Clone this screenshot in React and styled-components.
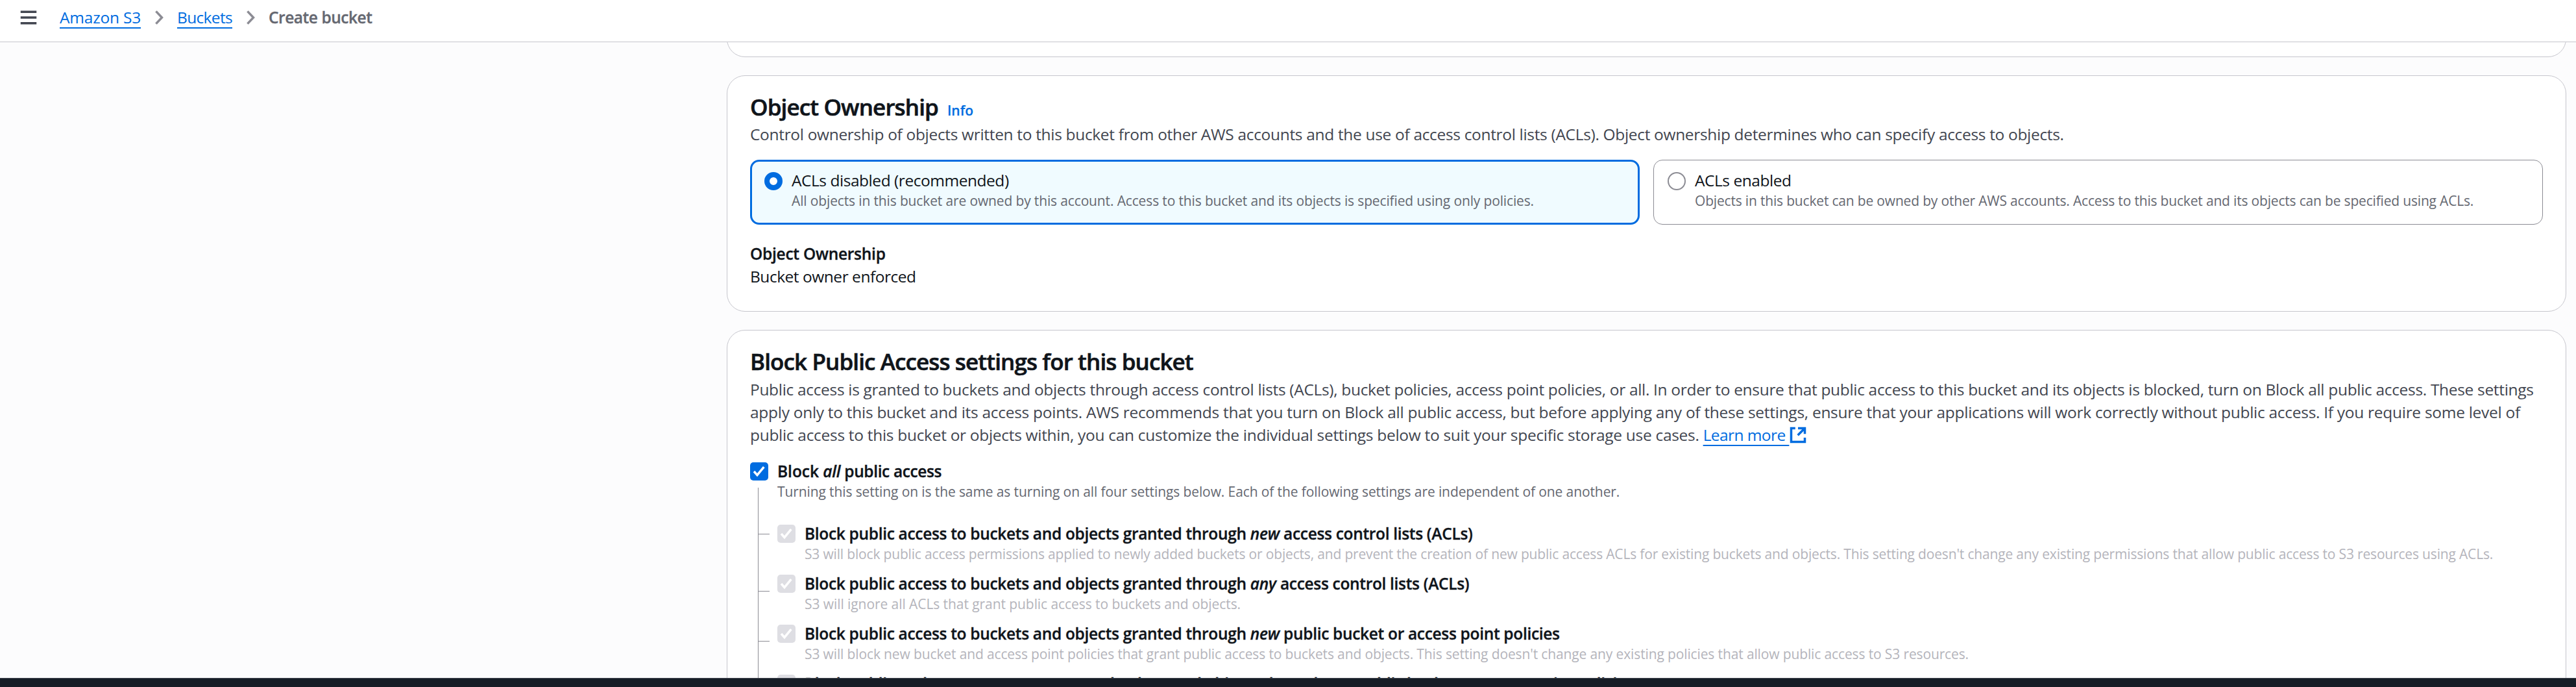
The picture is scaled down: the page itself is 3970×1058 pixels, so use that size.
import React from "react";
import styled, { createGlobalStyle, css } from "styled-components";

const color = {
  text: "#0f141a",
  body: "#424650",
  muted: "#656871",
  disabled: "#b4b4bb",
  link: "#006ce0",
  line: "#c6c6cd",
  control: "#8c8c94",
};

const GlobalStyle = createGlobalStyle`
  *, *::before, *::after { box-sizing: border-box; }
  body {
    margin: 0;
    background: #fcfcfd;
    color: ${color.text};
    font-family: "Open Sans", "Noto Sans", sans-serif;
    font-size: 24.5px;
    line-height: 35px;
    white-space: nowrap;
  }
`;

const strong = css`
  font-weight: 600;
  -webkit-text-stroke: 0.35px currentColor;
`;

const Page = styled.div`
  display: flex;
  flex-direction: column;
  height: 1058px;
  overflow: hidden;
`;

const TopBar = styled.header`
  display: flex;
  flex: none;
  align-items: flex-start;
  height: 65px;
  padding: 9px 0 0 30px;
  background: #fff;
  border-bottom: 1px solid ${color.line};
`;

const MenuButton = styled.button`
  display: flex;
  margin: 3.75px 34px 0 0;
  padding: 0;
  border: 0;
  background: none;
  color: ${color.body};
`;

const Breadcrumbs = styled.nav`
  display: flex;
  align-items: flex-start;
`;

const Separator = styled.svg`
  width: 14px;
  height: 24px;
  margin: 6px 20px 0 22px;
  fill: none;
  stroke: ${color.control};
  stroke-width: 3.5;
`;

const Link = styled.a`
  color: ${color.link};
  letter-spacing: ${(p) => p.$track || 0}px;
  text-decoration: underline;
  text-decoration-thickness: 2px;
  text-underline-offset: 6px;
  text-decoration-skip-ink: none;
`;

const CurrentCrumb = styled.span`
  ${strong}
  color: ${color.muted};
  letter-spacing: -0.457px;
`;

const Main = styled.main`
  display: flex;
  flex: 1;
  flex-direction: column;
  gap: 28px;
  min-height: 0;
  overflow: hidden;
  padding: 0 15px 0 1120px;
`;

const Card = styled.section`
  flex: none;
  height: ${(p) => p.$height}px;
  margin-top: ${(p) => p.$offset || 0}px;
  padding: 27px 35px 0;
  background: #fff;
  border: 1px solid ${color.line};
  border-radius: 28px;
`;

const Heading = styled.h2`
  display: flex;
  align-items: baseline;
  gap: 14px;
  margin: 0;
  font-size: 35px;
  line-height: 42px;
  font-weight: 600;
  -webkit-text-stroke: 0.6px currentColor;
  letter-spacing: -0.88px;
`;

const InfoLink = styled.a`
  color: ${color.link};
  font-size: 21px;
  line-height: 28px;
  letter-spacing: 0;
  -webkit-text-stroke: 0.2px currentColor;
`;

const Description = styled.p`
  display: flex;
  flex-direction: column;
  margin: ${(p) => p.$top}px 0 0;
  color: ${color.body};
`;

const Line = styled.span`
  letter-spacing: ${(p) => p.$track || 0}px;
`;

const ExternalIcon = styled.svg`
  width: 28px;
  height: 28px;
  margin-left: 0;
  vertical-align: -5px;
  fill: none;
  stroke: ${color.link};
  stroke-width: 2;
`;

const Options = styled.div`
  display: grid;
  grid-template-columns: 1fr 1fr;
  gap: 21px;
  margin-top: 22px;
`;

const Option = styled.label`
  display: flex;
  align-items: flex-start;
  gap: 14px;
  height: 100px;
  padding: ${(p) => (p.$selected ? "11px 19px" : "13px 21px")};
  border: ${(p) => (p.$selected ? `3px solid ${color.link}` : `1px solid ${color.control}`)};
  border-radius: 14px;
  background: ${(p) => (p.$selected ? "#f0fbff" : "#fff")};
`;

const Radio = styled.span`
  flex: none;
  width: 28px;
  height: 28px;
  margin-top: 5px;
  border-radius: 50%;
  border: ${(p) => (p.$selected ? `8px solid ${color.link}` : `2px solid ${color.control}`)};
  background: #fff;
`;

const Stack = styled.div`
  display: flex;
  flex-direction: column;
`;

const Label = styled.span`
  letter-spacing: -0.46px;
`;

const Hint = styled.span`
  color: ${(p) => (p.$disabled ? color.disabled : color.muted)};
  font-size: 21px;
  line-height: 28px;
  letter-spacing: ${(p) => p.$track}px;
`;

const Field = styled.dl`
  margin: 27px 0 0;
`;

const Term = styled.dt`
  ${strong}
  letter-spacing: -0.26px;
`;

const Value = styled.dd`
  margin: 0;
  letter-spacing: -0.47px;
`;

const Tree = styled.div`
  display: grid;
  grid-template-columns: 28px 1fr;
  column-gap: 14px;
  margin-top: 21px;
`;

const Trunk = styled.div`
  display: flex;
  flex-direction: column;
  padding-top: 4px;
  gap: 11px;
  &::after {
    content: "";
    flex: 1;
    width: 1px;
    margin-left: 12px;
    background: ${color.control};
  }
`;

const Branches = styled.div`
  display: flex;
  flex-direction: column;
  gap: 14px;
  margin-top: 33px;
`;

const Branch = styled.div`
  position: relative;
  display: flex;
  align-items: flex-start;
  gap: 14px;
  &::before {
    content: "";
    position: absolute;
    left: -29px;
    top: ${(p) => p.$tick}px;
    width: 17px;
    height: 1px;
    background: ${color.control};
  }
`;

const BoxIcon = styled.svg`
  flex: none;
  width: 28px;
  height: 28px;
  margin-top: ${(p) => p.$top || 0}px;
  border-radius: 5px;
  background: ${(p) => (p.$disabled ? "#dedee3" : color.link)};
  fill: none;
  stroke: #fff;
  stroke-width: 3.5;
`;

const CheckLabel = styled.span`
  ${strong}
  letter-spacing: ${(p) => p.$track}px;
  em { letter-spacing: -0.2px; }
`;

const Footer = styled.footer`
  flex: none;
  height: 14px;
  background: #161d26;
  border-top: 1px solid #424650;
`;

const Checkbox = (props) => (
  <BoxIcon viewBox="0 0 28 28" {...props}>
    <path d="M6 14l5 5.6L21.3 7.2" />
  </BoxIcon>
);

const Chevron = () => (
  <Separator viewBox="0 0 14 24">
    <path d="M1.4 2.4L10.5 12L1.4 21.6" />
  </Separator>
);

const rules = [
  {
    tick: 18, em: "new", rest: "access control lists (ACLs)", track: -0.172,
    hint: "S3 will block public access permissions applied to newly added buckets or objects, and prevent the creation of new public access ACLs for existing buckets and objects. This setting doesn't change any existing permissions that allow public access to S3 resources using ACLs.",
  },
  {
    tick: 29, em: "any", rest: "access control lists (ACLs)", track: -0.071,
    hint: "S3 will ignore all ACLs that grant public access to buckets and objects.",
  },
  {
    tick: 29, em: "new", rest: "public bucket or access point policies", track: -0.13,
    hint: "S3 will block new bucket and access point policies that grant public access to buckets and objects. This setting doesn't change any existing policies that allow public access to S3 resources.",
  },
];

export default function App() {
  return (
    <Page>
      <GlobalStyle />
      <TopBar>
        <MenuButton aria-label="Open menu">
          <svg width="28" height="28" viewBox="0 0 16 16" stroke="currentColor" strokeWidth="2">
            <path d="M1 3h14M1 8h14M1 13h14" />
          </svg>
        </MenuButton>
        <Breadcrumbs>
          <Link $track={-0.205}>Amazon S3</Link>
          <Chevron />
          <Link $track={-0.66}>Buckets</Link>
          <Chevron />
          <CurrentCrumb>Create bucket</CurrentCrumb>
        </Breadcrumbs>
      </TopBar>
      <Main>
        <Card $height={63} $offset={-40} />
        <Card $height={364}>
          <Heading>
            Object Ownership <InfoLink>Info</InfoLink>
          </Heading>
          <Description $top={3}>
            <Line $track={-0.324}>
              Control ownership of objects written to this bucket from other AWS accounts and the use of access control lists (ACLs). Object ownership determines who can specify access to objects.
            </Line>
          </Description>
          <Options>
            <Option $selected>
              <Radio $selected />
              <Stack>
                <Label>ACLs disabled (recommended)</Label>
                <Hint $track={-0.14}>
                  All objects in this bucket are owned by this account. Access to this bucket and its objects is specified using only policies.
                </Hint>
              </Stack>
            </Option>
            <Option>
              <Radio />
              <Stack>
                <Label>ACLs enabled</Label>
                <Hint $track={-0.18}>
                  Objects in this bucket can be owned by other AWS accounts. Access to this bucket and its objects can be specified using ACLs.
                </Hint>
              </Stack>
            </Option>
          </Options>
          <Field>
            <Term>Object Ownership</Term>
            <Value>Bucket owner enforced</Value>
          </Field>
        </Card>
        <Card $height={640}>
          <Heading>Block Public Access settings for this bucket</Heading>
          <Description $top={4}>
            <Line $track={-0.322}>
              Public access is granted to buckets and objects through access control lists (ACLs), bucket policies, access point policies, or all. In order to ensure that public access to this bucket and its objects is blocked, turn on Block all public access. These settings
            </Line>
            <Line $track={-0.286}>
              apply only to this bucket and its access points. AWS recommends that you turn on Block all public access, but before applying any of these settings, ensure that your applications will work correctly without public access. If you require some level of
            </Line>
            <Line $track={-0.3}>
              public access to this bucket or objects within, you can customize the individual settings below to suit your specific storage use cases.{" "}
              <Link $track={-0.577}>Learn more&nbsp;</Link>
              <ExternalIcon viewBox="0 0 16 16">
                <path d="M14 10.3V14H2V2h3.6M8 2h6v5M14 2L7.8 8.2" />
              </ExternalIcon>
            </Line>
          </Description>
          <Tree>
            <Trunk>
              <Checkbox />
            </Trunk>
            <Stack>
              <CheckLabel $track={-0.38}>
                <Line $track={-0.05}>Block </Line>
                <em>all</em> public access
              </CheckLabel>
              <Hint $track={-0.106}>
                Turning this setting on is the same as turning on all four settings below. Each of the following settings are independent of one another.
              </Hint>
              <Branches>
                {rules.map((rule) => (
                  <Branch key={rule.hint} $tick={rule.tick}>
                    <Checkbox $disabled $top={4} />
                    <Stack>
                      <CheckLabel $track={-0.32}>
                        Block public access to buckets and objects granted through <em>{rule.em}</em> {rule.rest}
                      </CheckLabel>
                      <Hint $disabled $track={rule.track}>{rule.hint}</Hint>
                    </Stack>
                  </Branch>
                ))}
                <Branch $tick={29}>
                  <Checkbox $disabled $top={4} />
                  <Stack>
                    <CheckLabel $track={-0.32}>
                      Block public and cross-account access to buckets and objects through <em>any</em> public bucket or access point policies
                    </CheckLabel>
                  </Stack>
                </Branch>
              </Branches>
            </Stack>
          </Tree>
        </Card>
      </Main>
      <Footer />
    </Page>
  );
}
